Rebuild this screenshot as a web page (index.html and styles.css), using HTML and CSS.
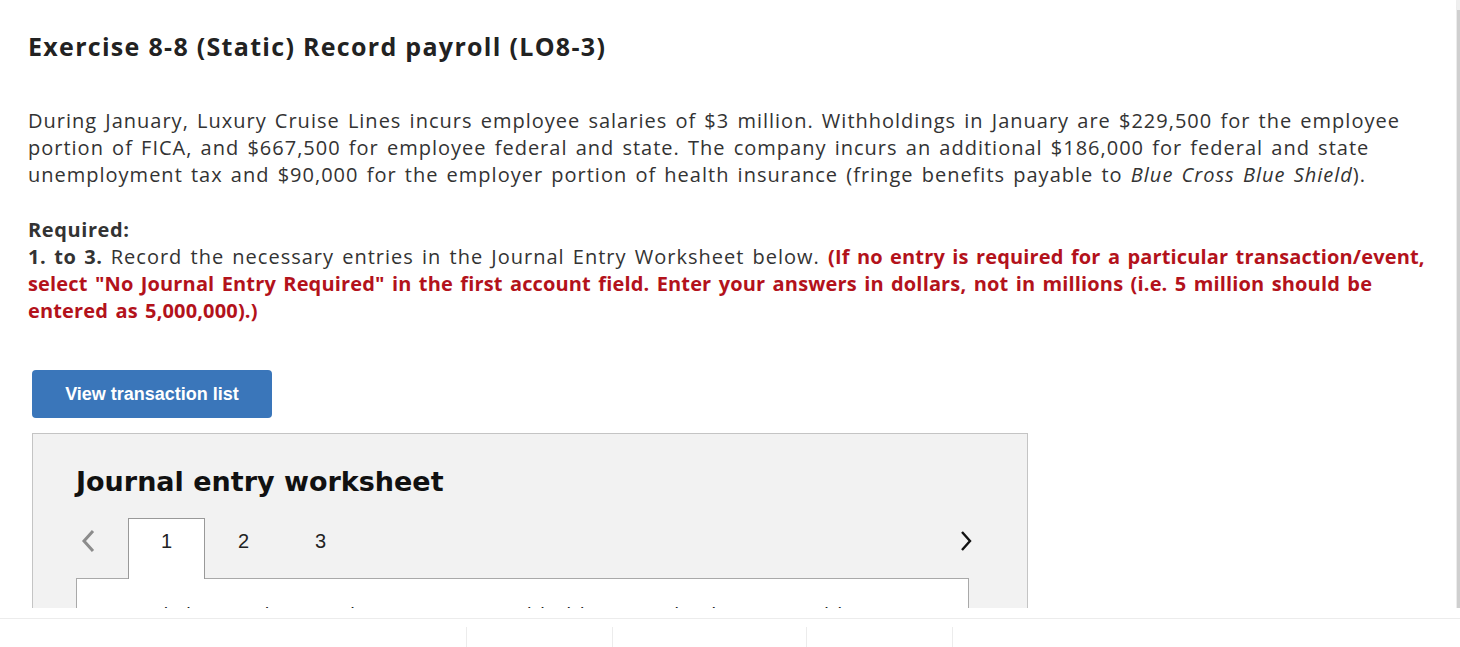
FILE: index.html
```html
<!DOCTYPE html>
<html lang="en">
<head>
  <meta charset="UTF-8">
  <meta name="viewport" content="width=device-width, initial-scale=1.0">
  <title>Exercise 8-8 (Static) Record payroll (LO8-3)</title>
  <link rel="stylesheet" href="styles.css">
</head>
<body>
  <div class="pagina">
    <main class="questao">
      <h1 class="titulo">Exercise 8-8 (Static) Record payroll (LO8-3)</h1>

      <p class="enunciado">During January, Luxury Cruise Lines incurs employee salaries of $3 million. Withholdings in January are $229,500 for the employee portion of FICA, and $667,500 for employee federal and state. The company incurs an additional $186,000 for federal and state unemployment tax and $90,000 for the employer portion of health insurance (fringe benefits payable to <em>Blue Cross Blue Shield</em>).</p>

      <p class="requisito">
        <strong>Required:</strong><br>
        <strong>1. to 3.</strong> Record the necessary entries in the Journal Entry Worksheet below. <strong class="aviso">(If no entry is required for a particular transaction/event, select "No Journal Entry Required" in the first account field. Enter your answers in dollars, not in millions (i.e. 5 million should be entered as 5,000,000).)</strong>
      </p>

      <button class="botao">View transaction list</button>

      <section class="planilha">
        <h2>Journal entry worksheet</h2>

        <div class="abas">
          <button class="seta seta-esq" aria-label="Previous">
            <svg width="16" height="24" viewBox="0 0 16 24"><polyline points="13,2 4,12 13,22" fill="none" stroke="#8c8c8c" stroke-width="3"/></svg>
          </button>
          <button class="aba ativa">1</button>
          <button class="aba">2</button>
          <button class="aba">3</button>
          <button class="seta seta-dir" aria-label="Next">
            <svg width="14" height="24" viewBox="0 0 14 24"><polyline points="3,3 11,12 3,21" fill="none" stroke="#111" stroke-width="2.4"/></svg>
          </button>
        </div>

        <div class="painel">
          <p>Record the employee salary expense, withholdings, and salaries payable.</p>
        </div>
      </section>
    </main>
    <div class="rolagem"></div>
  </div>

  <footer class="rodape">
    <div class="celula"></div>
    <div class="celula"></div>
    <div class="celula"></div>
    <div class="celula"></div>
    <div class="celula"></div>
  </footer>
</body>
</html>
```

FILE: styles.css
```css
body { margin: 0; background: #fff; font-family: "Open Sans", Lato, sans-serif; color: #333; }
.pagina { display: flex; height: 608px; overflow: hidden; }
.questao { flex: 1; padding: 31px 0 0 28px; }
.rolagem { width: 3px; background: #cfcfcf; border-top: 10px solid #efefef; border-left: 1px solid #ececec; }

.titulo { margin: 0; font-size: 25px; line-height: 30px; font-weight: 700; letter-spacing: 1.3px; color: #222; }
.enunciado { margin: 46px 0 0; font-size: 20px; line-height: 27px; letter-spacing: 1px; word-spacing: 2px; max-width: 1400px; }
.enunciado em { font-style: italic; }
.requisito { margin: 28px 0 0; font-size: 20px; line-height: 27px; letter-spacing: 1px; word-spacing: 2px; max-width: 1404px; }
.requisito strong { font-weight: 700; letter-spacing: 0.6px; }
.requisito .aviso { color: #b3121b; letter-spacing: 0.15px; }

.botao { display: block; margin: 46px 0 0 4px; width: 240px; height: 48px; background: #3a76ba; color: #fff; border: none; border-radius: 4px; font-family: "Liberation Sans", Arial, sans-serif; font-size: 18px; font-weight: 700; cursor: pointer; }

.planilha { box-sizing: border-box; margin: 15px 0 0 4px; width: 996px; height: 300px; padding: 32px 58px 0 43px; background: #f2f2f2; border: 1px solid #c4c4c4; }
.planilha h2 { margin: 0; font-family: "DejaVu Sans", Verdana, sans-serif; font-size: 27px; line-height: 32px; font-weight: 700; color: #111; }

.abas { display: flex; align-items: flex-start; margin-top: 20px; position: relative; z-index: 1; }
.seta { background: none; border: none; padding: 0; cursor: pointer; height: 24px; margin-top: 11px; }
.seta-esq { width: 52px; text-align: left; padding-left: 4px; }
.seta-dir { margin-left: auto; margin-right: -4px; }
.aba { width: 77px; height: 61px; margin-bottom: -1px; padding: 10px 0 0; background: none; border: 1px solid transparent; border-bottom: none; font-family: "Liberation Sans", Arial, sans-serif; font-size: 20px; line-height: 24px; color: #222; display: flex; justify-content: center; cursor: pointer; }
.aba.ativa { background: #fff; border-color: #999; }

.painel { background: #fff; border: 1px solid #a9a9a9; padding: 24px 21px; height: 200px; }
.painel p { margin: 0; font-size: 20px; line-height: 24px; letter-spacing: 1px; word-spacing: 2px; color: #222; }

.rodape { margin-top: 10px; border-top: 1px solid #ececec; display: grid; grid-template-columns: 466px 146px 194px 146px 1fr; }
.celula { margin-top: 8px; height: 20px; }
.celula + .celula { border-left: 1px solid #ececec; }
```
